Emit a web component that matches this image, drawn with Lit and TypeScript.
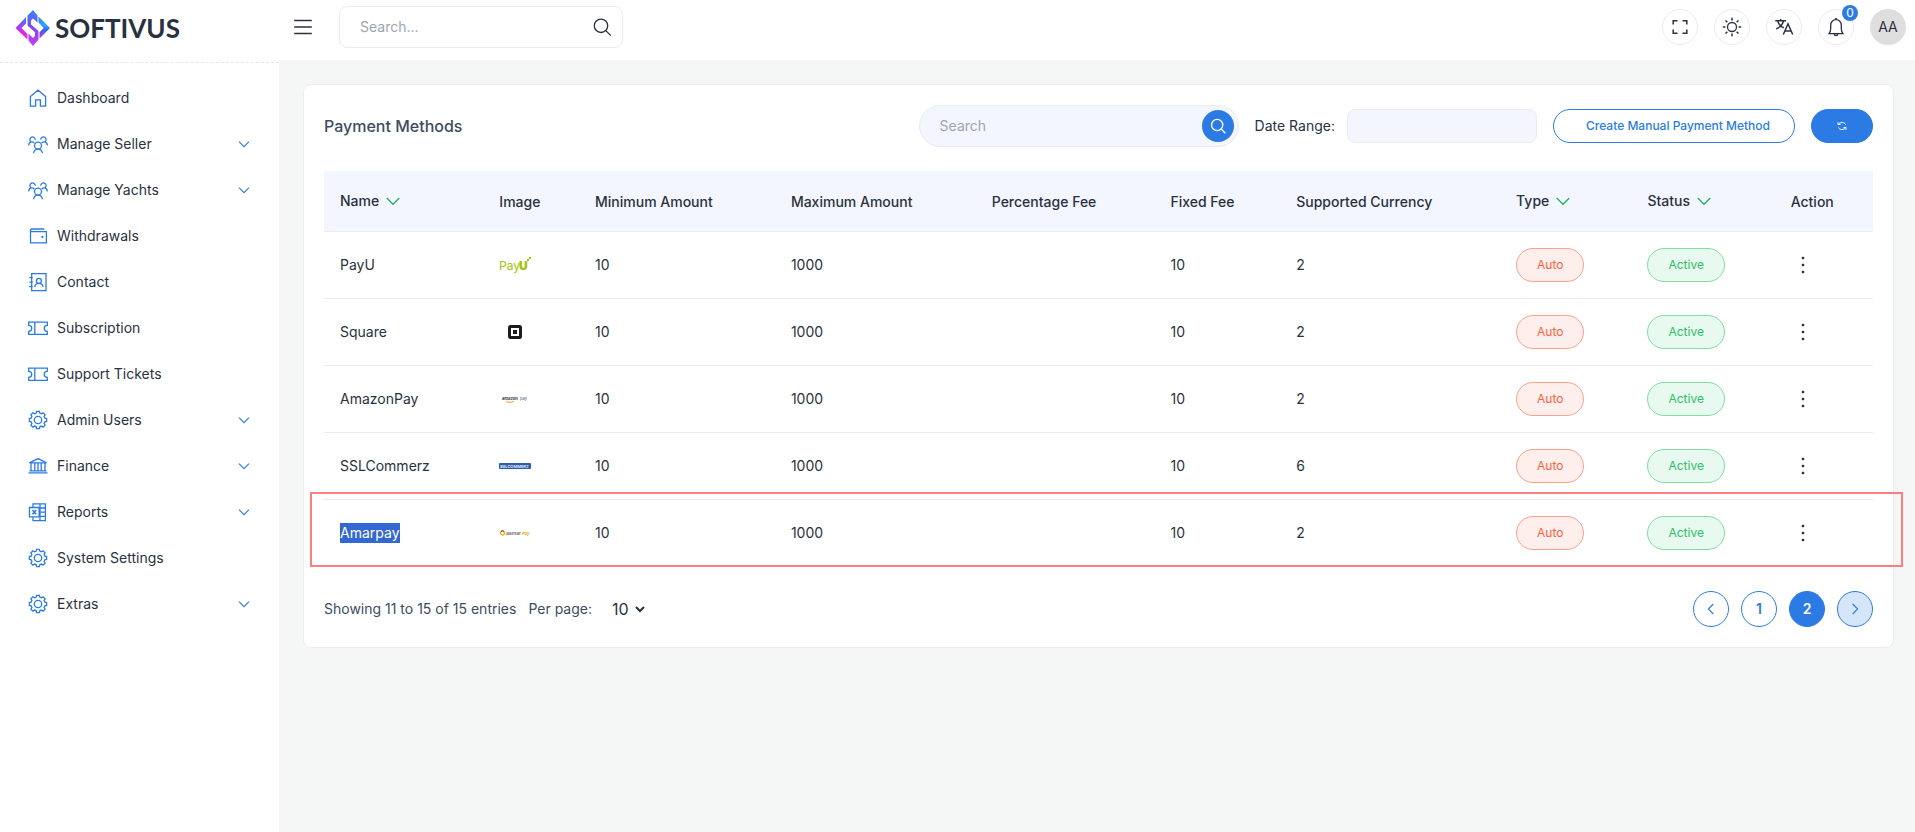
import { LitElement, html, css, svg, nothing } from "lit";
import { customElement } from "lit/decorators.js";

type NavItem = { label: string; icon: string; expandable?: boolean };
type Method = { name: string; image: string; currencies: number; selected?: boolean };

const NAV: NavItem[] = [
  { label: "Dashboard", icon: "home" },
  { label: "Manage Seller", icon: "users", expandable: true },
  { label: "Manage Yachts", icon: "users", expandable: true },
  { label: "Withdrawals", icon: "wallet" },
  { label: "Contact", icon: "contact" },
  { label: "Subscription", icon: "ticket" },
  { label: "Support Tickets", icon: "ticket" },
  { label: "Admin Users", icon: "cog", expandable: true },
  { label: "Finance", icon: "bank", expandable: true },
  { label: "Reports", icon: "report", expandable: true },
  { label: "System Settings", icon: "cog" },
  { label: "Extras", icon: "cog", expandable: true },
];

const METHODS: Method[] = [
  { name: "PayU", image: "payu", currencies: 2 },
  { name: "Square", image: "square", currencies: 2 },
  { name: "AmazonPay", image: "amazon", currencies: 2 },
  { name: "SSLCommerz", image: "ssl", currencies: 6 },
  { name: "Amarpay", image: "amarpay", currencies: 2, selected: true },
];

const ICONS: Record<string, unknown> = {
  home: svg`<path d="M4.4 10.6V20.1h5.2v-6.3h4.800v6.300h5.200v-9.500L12 4.200z"/>`,
  users: svg`<path d="M4.700 9.600a2.700 2.700 0 1 1 4.600-1.900M19.300 9.600a2.700 2.700 0 1 0-4.600-1.900M2.600 13.400c.3-2.100 1.300-3.500 3-3.500 1.300 0 2.100.4 2.800 1.200M21.400 13.400c-.3-2.100-1.300-3.500-3-3.500-1.300 0-2.100.4-2.800 1.200"/><circle cx="12" cy="13.600" r="3.500"/><path d="M7.600 21.200c.3-2.600 2-4.100 4.400-4.100s4.100 1.500 4.400 4.100"/>`,
  wallet: svg`<path d="M18.400 5H5.600Q4.500 5 4.500 6.200V18.900H20.400V7.600H5.600Q4.500 7.600 4.500 6.300"/><circle cx="16.400" cy="13" r=".5"/>`,
  contact: svg`<path d="M5.700 3.700H20v17H5.700zM3.300 7.700h3.400M3.300 12.200h3.400M3.300 16.700h3.400"/><circle cx="12.900" cy="10.900" r="2.500"/><path d="M8.700 17c.4-2.300 2-3.600 4.200-3.600s3.800 1.300 4.200 3.600"/>`,
  ticket: svg`<path d="M2.700 6.200H21.300V9.300a3 3 0 0 0 0 6.100V18.400H2.700V15.400a3 3 0 0 0 0-6.100zM8.800 6.200v12.200"/>`,
  cog: svg`<path d="M10.200 5.100l.4-1.800h2.800l.4 1.800 1.700.7 1.600-1 2 2-1 1.600.7 1.700 1.800.4v2.900l-1.800.4-.7 1.700 1 1.600-2 2-1.600-1-1.700.7-.4 1.800h-2.800l-.4-1.800-1.700-.7-1.600 1-2-2 1-1.600-.7-1.700-1.800-.4v-2.900l1.800-.4.700-1.700-1-1.600 2-2 1.600 1z"/><circle cx="12" cy="12" r="3.700"/>`,
  bank: svg`<path d="M3.400 8.900 12 4.600l8.600 4.300zM2.500 18.900h19M3.500 16.900h17M5 9v7.800M8.800 9v7.800M12 9v7.800M15.200 9v7.800M19 9v7.800"/>`,
  report: svg`<path d="M7 7.500V3.800H19.400V20.600H7v-3.800M14 3.800v16.800M14 8h5.400M14 12.200h5.400M14 16.400h5.400M3.500 7.500h9.600v9.300H3.500z"/><path stroke-width="1.600" d="M6.500 10l3.600 4.300M10.100 10l-3.600 4.300"/>`,
  menu: svg`<path stroke-width="1.700" d="M3.200 5.500h17.600M3.200 12h17.600M3.200 18.500h17.600"/>`,
  search: svg`<circle cx="11" cy="10.800" r="6.700"/><path d="M15.800 15.600l5 5"/>`,
  expand: svg`<path stroke-width="1.500" d="M5.200 9.500V5.700h4.300M14.500 5.700h4.300v3.800M18.800 14.500v3.800h-4.300M9.500 18.300H5.200v-3.800"/>`,
  sun: svg`<circle cx="12" cy="12" r="4.500"/><path stroke-width="1.500" d="M12 2.800v2.600M12 18.600v2.600M2.800 12h2.600M18.600 12h2.600M5.500 5.500l1.800 1.800M16.700 16.700l1.800 1.800M5.500 18.500l1.800-1.800M16.700 7.300l1.800-1.800"/>`,
  translate: svg`<path stroke-width="1.500" d="M3.300 5.700h10.800M8.700 3.900v1.800M11.600 5.900c-.9 3.600-3.400 6.400-7.500 8M5.800 6.200c1 3.300 3.200 5.600 6 6.600M11.300 19.500 16 8.800l4.700 10.700M12.900 15.900h6.200"/>`,
  bell: svg`<path d="M5 18.600h14c-1.300-1.300-1.700-2.500-1.700-5V10.300c0-3.500-2.300-5.600-5.300-5.600s-5.300 2.100-5.300 5.600v3.300c0 2.500-.4 3.700-1.700 5zM10 18.700c.2 1.400 1 2 2 2s1.800-.6 2-2M11.100 4.700c0-1.500 1.800-1.500 1.800 0"/>`,
  down: svg`<path d="M4.500 8.500l7.500 7.500 7.500-7.500"/>`,
  left: svg`<path d="M15.500 4.500l-7.500 7.500 7.500 7.500"/>`,
  right: svg`<path d="M8.500 4.500l7.500 7.500-7.500 7.500"/>`,
  refresh: svg`<path d="M4 9V4.500M4 9h5M4.500 9C6.500 6 9 5 12.500 5c3 0 5.500 1.500 6.500 4M20 15v4.500M20 15h-5M19.500 15c-2 3-4.500 4-8 4-3 0-5.500-1.500-6.500-4"/>`,
  dots: svg`<g fill="currentColor" stroke="none"><rect x="10.700" y="3.700" width="2.600" height="2.600" rx="1"/><rect x="10.700" y="10.700" width="2.600" height="2.600" rx="1"/><rect x="10.700" y="17.700" width="2.600" height="2.600" rx="1"/></g>`,
};

const icon = (name: string, cls = "") =>
  html`<svg class="icon ${cls}" viewBox="0 0 24 24" aria-hidden="true">${ICONS[name]}</svg>`;

const LOGOS: Record<string, unknown> = {
  payu: svg`<text x="0" y="21" font-size="12" fill="#a6c307">Pay</text><text x="20" y="21" font-size="12" font-weight="900" fill="#a6c307">U</text><rect x="28" y="10" width="2" height="2" fill="#a6c307"/><rect x="30" y="8" width="2" height="2" fill="#a6c307"/>`,
  square: svg`<rect x="10.500" y="10.500" width="11" height="11" rx="1" fill="#fff" stroke="#1c1c1e" stroke-width="3"/><rect x="14" y="14" width="4" height="4" fill="#1c1c1e"/>`,
  amazon: svg`<text x="3" y="17" font-size="4" font-weight="800" fill="#4c525c">amazon</text><text x="21" y="17" font-size="4" fill="#4c525c">pay</text><path d="M7 18.200q4 2.200 8 0" fill="none" stroke="#f7b267" stroke-width="1.300"/>`,
  ssl: svg`<rect x="0" y="13" width="32" height="6" rx="1" fill="#2f5cab"/><text x="1" y="18" font-size="4" font-weight="700" fill="#dfe8f7">SSLCOMMERZ</text>`,
  amarpay: svg`<circle cx="3.500" cy="16" r="2" fill="none" stroke="#f5a623" stroke-width="1.300"/><path d="M2 14.500a2 2 0 0 1 3 0" fill="none" stroke="#4a4a4a"/><text x="7" y="18" font-size="5" font-weight="600" fill="#6a6a6a">aamar</text><text x="23" y="18" font-size="4" font-weight="700" font-style="italic" fill="#f5a623">Pay</text>`,
};

@customElement("app-root")
export class AppRoot extends LitElement {
  static styles = css`
    :host {
      display: block;
      font-family: Inter, "Liberation Sans", sans-serif;
      font-size: 14px;
      line-height: 20px;
      color: #2a3142;
      --blue: #2c7be5;
      --line: #ebecee;
      --tint: #f3f6fe;
    }
    * { box-sizing: border-box; }
    button, input, select { font: inherit; color: inherit; margin: 0; }
    button { cursor: pointer; padding: 0; background: none; border: 0; }
    a { color: inherit; text-decoration: none; }
    .icon {
      width: 24px; height: 24px; display: block; flex: none;
      fill: none; stroke: currentColor; stroke-width: 1.3;
    }
    .s20 { width: 20px; height: 20px; stroke-width: 1.6; }
    .s16 { width: 16px; height: 16px; stroke-width: 1.7; }
    .s12 { width: 12px; height: 12px; stroke-width: 2; }
    .shell { display: grid; grid-template-columns: 279px minmax(0, 1fr); min-height: 100vh; }
    .side { background: #fff; }
    .brand {
      display: flex; align-items: center; gap: 4px; height: 63px;
      padding: 0 0 6px 15px; border-bottom: 1px dashed #e3e5e8;
    }
    .brand svg { width: 36px; height: 36px; }
    .word { font: 700 26px/36px Lato, sans-serif; color: #29303f; }
    .nav { list-style: none; margin: 0; padding: 12px 0; }
    .nav a { display: flex; align-items: center; gap: 7px; height: 46px; padding: 0 27px 0 26px; }
    .nav .icon { color: var(--blue); }
    .nav span { flex: 1; }
    .main { background: #f5f7f7; }
    .top {
      display: flex; align-items: center; height: 60px; background: #fff;
      padding: 0 9px 6px 12px; gap: 24px;
    }
    .global {
      display: flex; align-items: center; width: 284px; height: 42px;
      border: 1px solid var(--line); border-radius: 8px; padding: 0 8px 0 20px;
    }
    .global input, .search input {
      flex: 1; min-width: 0; border: 0; outline: 0; background: none; padding: 0;
    }
    input::placeholder { color: #9ea5b1; opacity: 1; }
    .tools { display: flex; gap: 16px; margin-left: auto; }
    .round {
      position: relative; width: 36px; height: 36px; border-radius: 50%;
      border: 1px solid var(--line); display: grid; place-items: center;
    }
    .avatar { background: #dedede; border: 0; }
    .badge {
      position: absolute; top: -5px; right: -5px; width: 16px; height: 16px;
      border-radius: 50%; background: var(--blue); color: #fff;
      font-size: 12px; line-height: 16px; text-align: center;
    }
    .content { padding: 24px 21px 24px 24px; }
    .card { background: #fff; border: 1px solid var(--line); border-radius: 8px; padding: 20px; }
    .bar { display: flex; align-items: center; gap: 16px; margin-bottom: 24px; }
    h1 { font-size: 16px; line-height: 24px; font-weight: 500; color: #414b5f; margin: 0 auto 0 0; }
    .search {
      display: flex; align-items: center; width: 320px; height: 42px; padding: 0 4px 0 20px;
      border: 1px solid var(--line); border-radius: 21px; background: var(--tint);
    }
    .go { width: 32px; height: 32px; border-radius: 50%; background: var(--blue); color: #fff; display: grid; place-items: center; }
    .range { display: flex; align-items: center; gap: 12px; }
    .range input {
      width: 190px; height: 34px; border: 1px solid var(--line); border-radius: 8px;
      background: var(--tint); padding: 0 12px;
    }
    .pill { height: 34px; border-radius: 17px; border: 1px solid var(--blue); font-size: 12px; font-weight: 500; }
    .create { color: var(--blue); padding: 0 24px 0 32px; }
    .reload { background: var(--blue); color: #fff; width: 62px; display: grid; place-items: center; }
    .wrap { position: relative; }
    table { width: 100%; border-collapse: separate; border-spacing: 0; }
    th, td { text-align: left; padding: 0 16px; border-bottom: 1px solid var(--line); white-space: nowrap; }
    th { height: 61px; padding-top: 2px; background: var(--tint); font-weight: 500; }
    td { height: 67px; }
    .sort { display: flex; align-items: center; gap: 4px; padding-bottom: 2px; font-weight: 500; }
    .sort .icon { color: #27ae60; }
    .logo { display: block; width: 32px; height: 32px; font-family: Inter, sans-serif; }
    .tag { display: inline-block; vertical-align: middle; line-height: 32px; padding: 0 20px; border: 1px solid; border-radius: 17px; font-size: 12px; }
    .auto { color: #ff6240; background: #ffefec; border-color: #ffa08c; }
    .active { color: #2cc067; background: #e8f9ef; border-color: #80dfa4; }
    .more { display: block; }
    .picked { display: inline-block; background: #3367d1; color: #fff; }
    .outline {
      position: absolute; left: -14px; right: -30px; bottom: 0; height: 75px;
      border: 2px solid #ff7e80; pointer-events: none;
    }
    .foot { display: flex; align-items: center; gap: 12px; margin-top: 24px; color: #414b5f; }
    .foot label { display: flex; align-items: center; gap: 16px; }
    .foot select { border: 0; background: none; font-size: 16px; color: #2a3142; outline: 0; }
    .pages { display: flex; gap: 12px; margin-left: auto; }
    .page {
      width: 36px; height: 36px; border-radius: 50%; border: 1px solid var(--blue);
      color: var(--blue); display: grid; place-items: center; font-weight: 600;
    }
    .current { background: var(--blue); color: #fff; }
    .hover { background: #d5e5fa; }
  `;

  private sortable(label: string) {
    return html`<th scope="col"><button class="sort">${label} ${icon("down", "s20")}</button></th>`;
  }

  private row(m: Method) {
    return html`<tr>
      <td>${m.selected ? html`<span class="picked">${m.name}</span>` : m.name}</td>
      <td><svg class="logo" viewBox="0 0 32 32" role="img" aria-label=${m.name}>${LOGOS[m.image]}</svg></td>
      <td>10</td>
      <td>1000</td>
      <td></td>
      <td>10</td>
      <td>${m.currencies}</td>
      <td><span class="tag auto">Auto</span></td>
      <td><span class="tag active">Active</span></td>
      <td><button class="more" aria-label="Actions">${icon("dots")}</button></td>
    </tr>`;
  }

  render() {
    return html`<div class="shell">
      <aside class="side">
        <a class="brand" href="#">
          <svg viewBox="0 0 36 36" aria-hidden="true">
            <defs>
              <linearGradient id="l" x1="0" y1="0" x2="0" y2="1"><stop offset="0" stop-color="#2f86f6"/><stop offset=".45" stop-color="#a23df5"/><stop offset=".7" stop-color="#f21be0"/><stop offset="1" stop-color="#b44bf8"/></linearGradient>
              <linearGradient id="r" x1="0" y1="0" x2="0" y2="1"><stop offset="0" stop-color="#2f7df5"/><stop offset=".4" stop-color="#2aa7fb"/><stop offset=".6" stop-color="#3a62ee"/><stop offset="1" stop-color="#c02ff0"/></linearGradient>
              <linearGradient id="m" x1="0" y1="0" x2="0" y2="1"><stop offset="0" stop-color="#2f8cf6"/><stop offset=".45" stop-color="#7a48f2"/><stop offset="1" stop-color="#c93cf6"/></linearGradient>
            </defs>
            <path fill="url(#l)" d="M11 7v6.500L6.500 18l6 6.200v5.300L.5 18z"/>
            <path fill="url(#r)" d="M23.500 6.500 35 18 24.500 28.500v-6.300l4.200-4.200-5.200-5.400z"/>
            <path fill="url(#m)" d="M12.500 5.500 18 0l4.500 5.500v7L18 8.500l-2 2v4l7.500 6.500v8.500L18 36l-4.500-5.500v-7l4.500 4.500 2-2v-3.800l-7.500-6.700z"/>
          </svg>
          <span class="word">SOFTIVUS</span>
        </a>
        <nav><ul class="nav">
          ${NAV.map((n) => html`<li><a href="#">${icon(n.icon)}<span>${n.label}</span>${n.expandable ? icon("down", "s16") : nothing}</a></li>`)}
        </ul></nav>
      </aside>
      <div class="main">
        <header class="top">
          <button aria-label="Toggle menu">${icon("menu")}</button>
          <label class="global">
            <input type="text" placeholder="Search..." aria-label="Search site" />
            ${icon("search")}
          </label>
          <div class="tools">
            <button class="round" aria-label="Fullscreen">${icon("expand")}</button>
            <button class="round" aria-label="Theme">${icon("sun")}</button>
            <button class="round" aria-label="Language">${icon("translate")}</button>
            <button class="round" aria-label="Notifications">${icon("bell")}<span class="badge">0</span></button>
            <button class="round avatar">AA</button>
          </div>
        </header>
        <main class="content">
          <section class="card">
            <div class="bar">
              <h1>Payment Methods</h1>
              <div class="search">
                <input type="text" placeholder="Search" aria-label="Search payment methods" />
                <button class="go" aria-label="Search">${icon("search", "s20")}</button>
              </div>
              <label class="range">Date Range: <input type="text" /></label>
              <button class="pill create">Create Manual Payment Method</button>
              <button class="pill reload" aria-label="Refresh">${icon("refresh", "s12")}</button>
            </div>
            <div class="wrap">
              <table>
                <thead><tr>
                  ${this.sortable("Name")}
                  <th scope="col">Image</th>
                  <th scope="col">Minimum Amount</th>
                  <th scope="col">Maximum Amount</th>
                  <th scope="col">Percentage Fee</th>
                  <th scope="col">Fixed Fee</th>
                  <th scope="col">Supported Currency</th>
                  ${this.sortable("Type")}
                  ${this.sortable("Status")}
                  <th scope="col">Action</th>
                </tr></thead>
                <tbody>${METHODS.map((m) => this.row(m))}</tbody>
              </table>
              <div class="outline"></div>
            </div>
            <div class="foot">
              <span>Showing 11 to 15 of 15 entries</span>
              <label>Per page:
                <select><option>10</option><option>25</option><option>50</option></select>
              </label>
              <nav class="pages" aria-label="Pagination">
                <button class="page" aria-label="Previous">${icon("left", "s16")}</button>
                <button class="page">1</button>
                <button class="page current" aria-current="page">2</button>
                <button class="page hover" aria-label="Next">${icon("right", "s16")}</button>
              </nav>
            </div>
          </section>
        </main>
      </div>
    </div>`;
  }
}
